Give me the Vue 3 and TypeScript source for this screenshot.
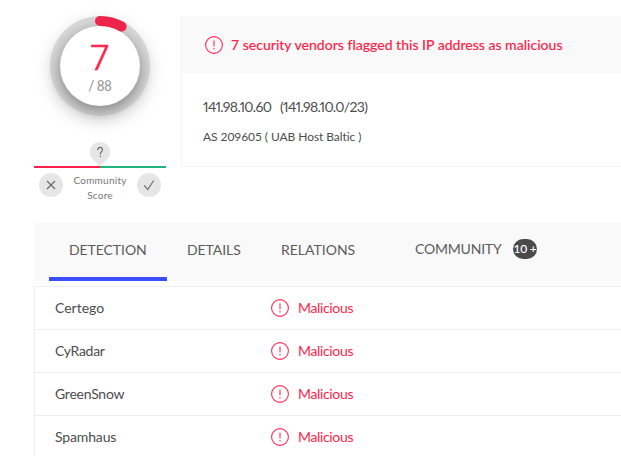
<script setup lang="ts">
interface Vendor {
  name: string
  verdict: string
  cls: string
}

const vendors: Vendor[] = [
  { name: 'Certego', verdict: 'Malicious', cls: 'certego' },
  { name: 'CyRadar', verdict: 'Malicious', cls: 'cyradar' },
  { name: 'GreenSnow', verdict: 'Malicious', cls: 'greensnow' },
  { name: 'Spamhaus', verdict: 'Malicious', cls: 'spamhaus' },
]
</script>

<template>
  <main class="page">
    <section class="summary">
      <aside class="score">
        <div class="gauge">
          <div class="dial">
            <span class="hits">7</span>
            <span class="total">/ 88</span>
          </div>
          <svg class="arc" viewBox="0 0 100 100" width="100" height="100">
            <path d="M50 5A45 45 0 0 1 71.6 10.5" />
          </svg>
        </div>
        <svg class="pin" viewBox="0 0 22 24" width="22" height="24">
          <path class="drop" d="M11 24C8 20.500 .5 17 .5 10.300a10.500 10.300 0 0 1 21 0C21.500 17 14 20.500 11 24z" />
          <path class="mark" d="M8.700 8.200c0-3.700 4.800-3.600 4.800-.4 0 2.100-2.300 2.200-2.300 4.700M11.200 13.700v1.200" />
        </svg>
        <div class="bar"></div>
        <div class="votes">
          <svg viewBox="0 0 24 24" width="24" height="24">
            <circle cx="12" cy="12" r="12" />
            <path d="M8 8l8 8M16 8l-8 8" />
          </svg>
          <div class="caption"><span class="community">Community</span><span class="word">Score</span></div>
          <svg viewBox="0 0 24 24" width="24" height="24">
            <circle cx="12" cy="12" r="12" />
            <path d="M7.200 12.300l3.500 4.200 6-9" />
          </svg>
        </div>
      </aside>
      <article class="card">
        <header class="alert">
          <svg class="warn" viewBox="0 0 18 18" width="18" height="18">
            <circle cx="9" cy="9" r="8.400" />
            <path d="M9 4.500v6M9 12v1.500" />
          </svg>
          <span class="headline">7 security vendors flagged this IP address as malicious</span>
        </header>
        <div class="details">
          <div class="address"><span class="ip">141.98.10.60</span><span class="range">(141.98.10.0/23)</span></div>
          <div class="owner">AS 209605 ( UAB Host Baltic )</div>
        </div>
      </article>
    </section>
    <nav class="tabs">
      <a class="tab active"><span class="t1">DETECTION</span></a>
      <a class="tab details-tab"><span class="t2">DETAILS</span></a>
      <a class="tab relations-tab"><span class="t3">RELATIONS</span></a>
      <a class="tab community-tab"><span class="t4">COMMUNITY</span><span class="badge">10 +</span></a>
    </nav>
    <ul class="vendors">
      <li v-for="v in vendors" :key="v.name">
        <span class="name"><span :class="v.cls">{{ v.name }}</span></span>
        <svg class="warn" viewBox="0 0 18 18" width="18" height="18">
          <circle cx="9" cy="9" r="8.400" />
          <path d="M9 4.500v6M9 12v1.500" />
        </svg>
        <span class="verdict">{{ v.verdict }}</span>
      </li>
    </ul>
  </main>
</template>

<style>
body {
  background: #fff;
  overflow: hidden;
}
</style>

<style scoped>
.page {
  box-sizing: border-box;
  width: 621px;
  height: 456px;
  padding: 16px 0 0 34px;
  overflow: hidden;
  font-family: Lato, "Open Sans", sans-serif;
  color: #4d4d4d;
  white-space: nowrap;
}
.summary {
  display: flex;
  height: 207px;
}
.score {
  display: flex;
  flex-direction: column;
  align-items: center;
  width: 132px;
  margin-right: 15px;
}
.gauge {
  position: relative;
  display: grid;
  place-items: center;
  width: 100px;
  height: 100px;
  border-radius: 50%;
  background: #d9d9d9;
  box-shadow: 0 5px 18px rgba(0, 0, 0, 0.12);
}
.dial {
  display: flex;
  flex-direction: column;
  align-items: center;
  width: 80px;
  height: 80px;
  border-radius: 50%;
  background: #fff;
  box-shadow: 0 5px 16px rgba(0, 0, 0, 0.42);
  font-family: Roboto, sans-serif;
}
.hits {
  margin-top: 14px;
  font-size: 35px;
  font-weight: 300;
  line-height: 38px;
  color: #ff1f4b;
  -webkit-text-stroke: 0.7px #ff1f4b;
}
.total {
  margin-top: -1px;
  font-size: 14px;
  font-weight: 400;
  letter-spacing: -0.5px;
  line-height: 18px;
  color: #999;
}
.arc {
  position: absolute;
  inset: 0;
}
.arc path {
  fill: none;
  stroke: #ee244b;
  stroke-width: 10;
  stroke-linecap: round;
}
.pin {
  flex: none;
  margin-top: 26px;
}
.drop {
  fill: #e6e6e6;
}
.mark {
  fill: none;
  stroke: #666;
  stroke-width: 1.1;
}
.bar {
  flex: none;
  width: 132px;
  height: 2px;
  background: linear-gradient(90deg, #ff1f4b 50%, #24b47e 50%);
}
.votes {
  display: flex;
  justify-content: space-between;
  width: 122px;
  margin-top: 5px;
}
.votes circle {
  fill: #e6e6e6;
}
.votes path {
  fill: none;
  stroke: #666;
  stroke-width: 1.1;
}
.caption {
  display: flex;
  flex-direction: column;
  align-items: center;
  font-size: 10px;
  letter-spacing: 0.25px;
  line-height: 15px;
  color: #777;
}
.card {
  box-sizing: border-box;
  flex: 1;
  height: 151px;
  border: 1px solid #f4f4f4;
  border-right: 0;
  border-top: 0;
}
.alert {
  display: flex;
  align-items: center;
  gap: 8px;
  height: 57px;
  padding-left: 23px;
  background: #f9f9f9;
  color: #ff1f4b;
}
.warn {
  flex: none;
  fill: none;
  stroke: #ff2d57;
  stroke-width: 1.1;
}
.headline {
  font-size: 14px;
  font-weight: 500;
  letter-spacing: 0.01px;
  -webkit-text-stroke: 0.1px #ff1f4b;
}
.details {
  padding: 24px 0 0 21px;
}
.address {
  display: flex;
  gap: 9px;
  font-size: 14px;
  line-height: 20px;
  font-feature-settings: "pnum";
}
.ip {
  width: 68px;
  letter-spacing: -0.65px;
}
.range {
  letter-spacing: -0.65px;
}
.owner {
  margin-top: 11px;
  font-size: 12px;
  line-height: 18px;
  letter-spacing: -0.07px;
}
.tabs {
  display: flex;
  box-sizing: border-box;
  height: 58px;
  padding-left: 15px;
  background: #f9f9f9;
  font-size: 14px;
  line-height: 54px;
  color: #5c5c5c;
}
.tab {
  box-sizing: border-box;
  display: flex;
}
.active {
  width: 118px;
  padding-left: 20px;
  border-bottom: 4px solid #3b4eff;
}
.details-tab {
  width: 94px;
  padding-left: 20px;
}
.relations-tab {
  width: 134px;
  padding-left: 20px;
}
.community-tab {
  line-height: 52px;
  padding-left: 20px;
}
.t1,
.t2 {
  letter-spacing: -0.07px;
}
.t4 {
  width: 98px;
  letter-spacing: -0.2px;
}
.badge {
  width: 24px;
  height: 20px;
  margin-top: 16px;
  border-radius: 10px;
  background: #4a4a4a;
  color: #fff;
  font-size: 12px;
  font-weight: 500;
  letter-spacing: -0.2px;
  line-height: 20px;
  text-align: center;
}
.vendors {
  margin: 5px 0 0;
  padding: 0;
  list-style: none;
  border-left: 1px solid #eee;
}
.vendors li {
  box-sizing: border-box;
  display: flex;
  align-items: center;
  height: 43px;
  padding-left: 20px;
  border-top: 1px solid #eee;
  font-size: 14px;
}
.name,
.verdict {
  padding-bottom: 2px;
}
.name {
  width: 216px;
}
.cyradar {
  letter-spacing: -0.3px;
}
.greensnow {
  letter-spacing: -0.25px;
}
.spamhaus {
  letter-spacing: -0.15px;
}
.verdict {
  margin-left: 9px;
  letter-spacing: -0.35px;
  color: #ff1f4b;
}
</style>
